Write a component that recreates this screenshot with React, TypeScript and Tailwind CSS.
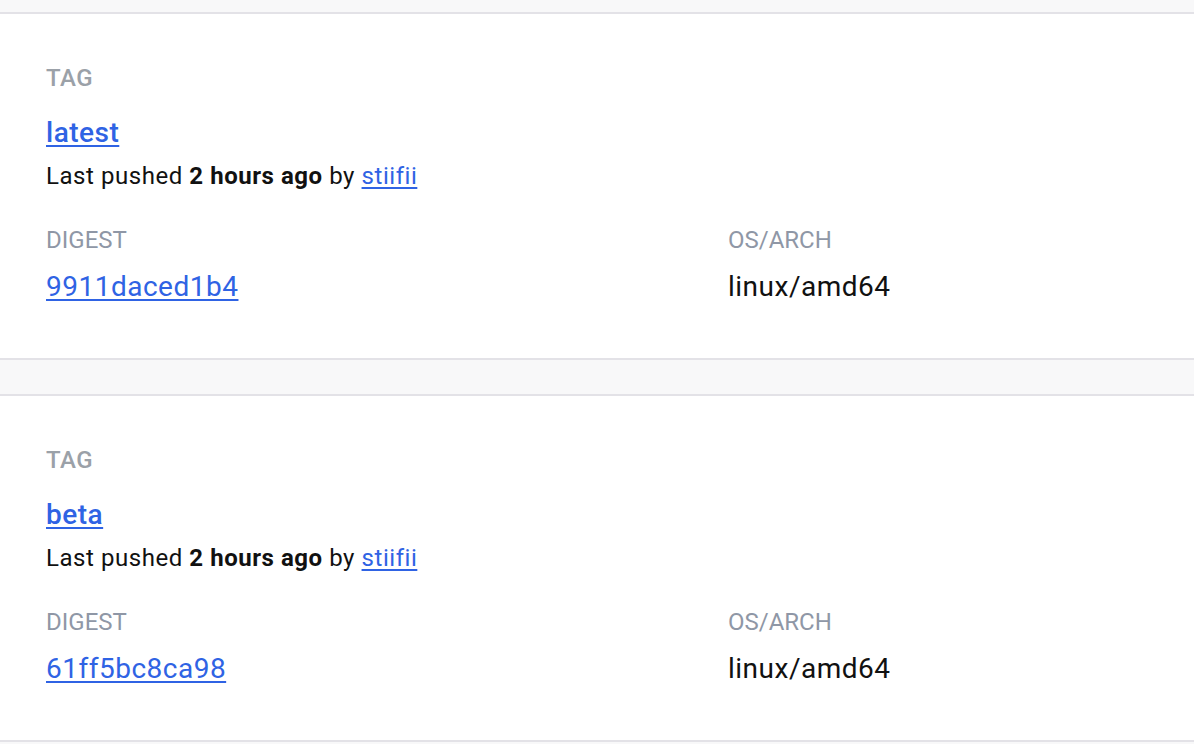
const TAGS = [
  { tag: "latest", digest: "9911daced1b4", arch: "linux/amd64", pushedBy: "stiifii" },
  { tag: "beta", digest: "61ff5bc8ca98", arch: "linux/amd64", pushedBy: "stiifii" },
];

function TagCard({
  tag,
  digest,
  arch,
  pushedBy,
}: {
  tag: string;
  digest: string;
  arch: string;
  pushedBy: string;
}) {
  return (
    <section className="border-y-2 border-[#e3e2e7] bg-white pl-[46px] pr-[46px] pt-[48px] pb-[53px] tracking-[0.5px]">
      <div className="text-[24px] leading-[32px] font-medium text-[#9ba1a8]">TAG</div>
      <a
        href="#"
        className="mt-[21px] block w-fit text-[28px] leading-[36px] font-medium text-[#2f63e4] underline decoration-2 underline-offset-[3px]"
      >
        {tag}
      </a>
      <p className="mt-[9px] text-[24px] leading-[32px] tracking-[0.55px] text-[#111]">
        Last pushed <span className="font-bold">2 hours ago</span> by{" "}
        <a href="#" className="text-[#2f63e4] underline underline-offset-[3px]">
          {pushedBy}
        </a>
      </p>
      <div className="mt-[32px] grid grid-cols-[682px_1fr]">
        <div>
          <div className="text-[24px] leading-[32px] tracking-normal text-[#8f97a6]">DIGEST</div>
          <a
            href="#"
            className="mt-[13px] block w-fit text-[28px] leading-[36px] text-[#2f63e4] underline decoration-2 underline-offset-[3px]"
          >
            {digest}
          </a>
        </div>
        <div>
          <div className="text-[24px] leading-[32px] tracking-normal text-[#8f97a6]">OS/ARCH</div>
          <div className="mt-[13px] text-[28px] leading-[36px] text-[#111]">{arch}</div>
        </div>
      </div>
    </section>
  );
}

export default function App() {
  return (
    <div
      className="min-h-[744px] bg-[#f8f8f9] pt-[12px]"
      style={{ fontFamily: "Roboto, 'Liberation Sans', sans-serif" }}
    >
      <div className="flex flex-col gap-[34px]">
        {TAGS.map((t) => (
          <TagCard key={t.tag} {...t} />
        ))}
      </div>
    </div>
  );
}
